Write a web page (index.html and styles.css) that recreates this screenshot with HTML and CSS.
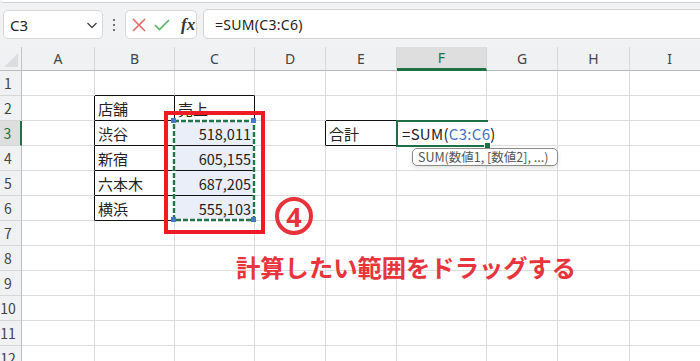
FILE: index.html
```html
<!DOCTYPE html>
<html lang="ja">
<head>
<meta charset="utf-8">
<title>Excel SUM</title>
<link rel="stylesheet" href="styles.css">
</head>
<body>
<div class="ribbon-edge"></div>
<div class="formula-bar">
  <div class="name-box">
    <span class="name-text">C3</span>
    <svg class="chevron" width="12" height="8" viewBox="0 0 12 8"><path d="M1.5 2 L6 6.5 L10.5 2" fill="none" stroke="#444" stroke-width="1.3"/></svg>
  </div>
  <div class="more-dots"><i></i><i></i><i></i></div>
  <div class="fx-box">
    <svg width="14" height="14" viewBox="0 0 14 14"><path d="M1 1 L13 13 M13 1 L1 13" stroke="#e06767" stroke-width="1.6" fill="none"/></svg>
    <svg width="16" height="12" viewBox="0 0 16 12"><path d="M1 6 L5.5 10.5 L15 1" stroke="#5cb46a" stroke-width="1.7" fill="none"/></svg>
    <span class="fx">fx</span>
  </div>
  <div class="formula-input">=SUM(C3:C6)</div>
</div>

<div class="sheet">
  <div class="c corner"><span class="tri"></span></div>
  <div class="c ch">A</div><div class="c ch">B</div><div class="c ch">C</div><div class="c ch">D</div><div class="c ch">E</div><div class="c ch ch-active">F</div><div class="c ch">G</div><div class="c ch">H</div><div class="c ch">I</div>

  <div class="c rh">1</div>
  <div class="c"></div><div class="c bk-b"></div><div class="c bk-b"></div><div class="c"></div><div class="c"></div><div class="c"></div><div class="c"></div><div class="c"></div><div class="c"></div>

  <div class="c rh">2</div>
  <div class="c bk-r"></div><div class="c bk-r bk-b">店舗</div><div class="c bk-r bk-b">売上</div><div class="c"></div><div class="c bk-b"></div><div class="c"></div><div class="c"></div><div class="c"></div><div class="c"></div>

  <div class="c rh rh-active">3</div>
  <div class="c bk-r"></div><div class="c bk-r bk-b">渋谷</div><div class="c bk-r bk-b sel num">518,011</div><div class="c bk-r"></div><div class="c bk-r bk-b">合計</div><div class="c editing">=SUM(<span class="ref">C3:C6</span>)</div><div class="c"></div><div class="c"></div><div class="c"></div>

  <div class="c rh">4</div>
  <div class="c bk-r"></div><div class="c bk-r bk-b">新宿</div><div class="c bk-r bk-b sel num">605,155</div><div class="c"></div><div class="c"></div><div class="c"></div><div class="c"></div><div class="c"></div><div class="c"></div>

  <div class="c rh">5</div>
  <div class="c bk-r"></div><div class="c bk-r bk-b">六本木</div><div class="c bk-r bk-b sel num">687,205</div><div class="c"></div><div class="c"></div><div class="c"></div><div class="c"></div><div class="c"></div><div class="c"></div>

  <div class="c rh">6</div>
  <div class="c bk-r"></div><div class="c bk-r bk-b">横浜</div><div class="c bk-r bk-b sel num">555,103</div><div class="c"></div><div class="c"></div><div class="c"></div><div class="c"></div><div class="c"></div><div class="c"></div>

  <div class="c rh">7</div>
  <div class="c"></div><div class="c"></div><div class="c"></div><div class="c"></div><div class="c"></div><div class="c"></div><div class="c"></div><div class="c"></div><div class="c"></div>
  <div class="c rh">8</div>
  <div class="c"></div><div class="c"></div><div class="c"></div><div class="c"></div><div class="c"></div><div class="c"></div><div class="c"></div><div class="c"></div><div class="c"></div>
  <div class="c rh">9</div>
  <div class="c"></div><div class="c"></div><div class="c"></div><div class="c"></div><div class="c"></div><div class="c"></div><div class="c"></div><div class="c"></div><div class="c"></div>
  <div class="c rh">10</div>
  <div class="c"></div><div class="c"></div><div class="c"></div><div class="c"></div><div class="c"></div><div class="c"></div><div class="c"></div><div class="c"></div><div class="c"></div>
  <div class="c rh">11</div>
  <div class="c"></div><div class="c"></div><div class="c"></div><div class="c"></div><div class="c"></div><div class="c"></div><div class="c"></div><div class="c"></div><div class="c"></div>
  <div class="c rh">12</div>
  <div class="c"></div><div class="c"></div><div class="c"></div><div class="c"></div><div class="c"></div><div class="c"></div><div class="c"></div><div class="c"></div><div class="c"></div>
</div>

<!-- overlays -->
<svg class="ants" width="90" height="110" viewBox="0 0 90 110">
  <rect x="3" y="3" width="80" height="99" fill="none" stroke="#ffffff" stroke-width="2.4"/>
  <rect x="3" y="3" width="80" height="99" fill="none" stroke="#21734a" stroke-width="2.4" stroke-dasharray="5 2"/>
  <rect x="0" y="0" width="5" height="5" fill="#4a78c9"/>
  <rect x="80" y="0" width="5" height="5" fill="#4a78c9"/>
  <rect x="0" y="99" width="5" height="5" fill="#4a78c9"/>
  <rect x="80" y="99" width="5" height="5" fill="#4a78c9"/>
</svg>
<div class="active-cell"><span class="handle"></span></div>
<div class="tooltip">SUM(数値1, [数値2], ...)</div>
<div class="red-box"></div>
<div class="step"><span>4</span></div>
<div class="note">計算したい範囲をドラッグする</div>
</body>
</html>
```
FILE: styles.css
```css
body {
  margin: 0;
  width: 700px;
  height: 361px;
  overflow: hidden;
  position: relative;
  background: #f1f2f4;
  font-family: "Noto Sans CJK JP", "Noto Sans", sans-serif;
}

.ribbon-edge {
  height: 2px;
  margin-left: 1px;
  background: #ffffff;
  border-bottom: 1px solid #cfd2d6;
  border-bottom-left-radius: 4px;
}

.formula-bar {
  height: 44px;
  box-sizing: border-box;
  padding-top: 7px;
  display: flex;
  align-items: flex-start;
}

.name-box {
  margin-left: 3px;
  width: 100px;
  height: 29px;
  box-sizing: border-box;
  background: #fff;
  border: 1px solid #d7d7d7;
  border-radius: 5px;
  display: flex;
  align-items: center;
  justify-content: space-between;
  padding: 0 4px 0 6px;
}

.name-text {
  font-family: "Noto Sans", sans-serif;
  font-size: 15px;
  color: #222;
}

.more-dots {
  width: 22px;
  height: 29px;
  display: flex;
  flex-direction: column;
  align-items: center;
  justify-content: center;
  gap: 3px;
}

.more-dots i {
  width: 2px;
  height: 2px;
  background: #444;
  border-radius: 1px;
}

.fx-box {
  width: 72px;
  height: 29px;
  box-sizing: border-box;
  background: #fff;
  border: 1px solid #d7d7d7;
  border-radius: 5px;
  display: flex;
  align-items: center;
  padding-left: 6px;
  gap: 8px;
}

.fx {
  font-family: "Liberation Serif", serif;
  font-style: italic;
  font-weight: 700;
  font-size: 17px;
  color: #333;
  margin-left: 3px;
}

.formula-input {
  margin-left: 6px;
  flex: 1;
  margin-right: -4px;
  height: 30px;
  margin-top: -1px;
  box-sizing: border-box;
  background: #fff;
  border: 1px solid #d2d2d2;
  border-radius: 5px 0 0 5px;
  padding-left: 11px;
  display: flex;
  align-items: center;
  font-family: "Noto Sans", sans-serif;
  font-size: 14px;
  letter-spacing: 0.3px;
  color: #222;
}

.sheet {
  display: grid;
  grid-template-columns: 22px 73px 80px 80px 71px 71px 90px 71px 72px 80px;
  grid-template-rows: 24px;
  grid-auto-rows: 25px;
  width: 710px;
  background: #fff;
}

.c {
  box-sizing: border-box;
  border-right: 1px solid #dcdcdc;
  border-bottom: 1px solid #dcdcdc;
  font-size: 15px;
  color: #222;
  padding-left: 3px;
  display: flex;
  align-items: center;
  white-space: nowrap;
  overflow: hidden;
}

.corner {
  background: #f0f1f3;
  border-right-color: #c4c4c4;
  border-bottom-color: #bdbdbd;
  position: relative;
}

.tri {
  position: absolute;
  right: 3px;
  bottom: 3px;
  width: 0;
  height: 0;
  border-left: 14px solid transparent;
  border-bottom: 14px solid #dcdde0;
}

.ch {
  background: #f0f1f3;
  justify-content: center;
  padding-left: 0;
  font-family: "Noto Sans", sans-serif;
  font-size: 14px;
  color: #444;
  border-right-color: #d6d6d6;
  border-bottom-color: #b8b8b8;
}

.ch-active {
  background: #dedede;
  color: #1e7145;
  border-bottom: 3px solid #1e7145;
}

.rh {
  background: #f0f1f3;
  justify-content: center;
  padding: 0 5px 0 0;
  font-size: 14px;
  color: #444;
  border-right-color: #bcbcbc;
  border-bottom-color: #d6d6d6;
}

.rh-active {
  background: #dedede;
  color: #1e7145;
  border-right: 2px solid #1e7145;
}

.bk-r { border-right-color: #111; }
.bk-b { border-bottom-color: #111; }

.sel { background: #e9eef8; }

.num {
  justify-content: flex-end;
  padding: 0 3px 0 0;
  font-size: 14.5px;
}

.editing {
  overflow: visible;
  border-right-color: transparent;
  position: relative;
  z-index: 2;
  padding-left: 5px;
  font-size: 15px;
  letter-spacing: 0.3px;
}

.ref { color: #4472c4; }

.ants {
  position: absolute;
  left: 171px;
  top: 118px;
}

.active-cell {
  position: absolute;
  left: 396px;
  top: 120px;
  width: 92px;
  height: 27px;
  box-sizing: border-box;
  border: 2px solid #1e7145;
  border-right: none;
  z-index: 3;
}

.handle {
  position: absolute;
  right: -3px;
  bottom: -4px;
  width: 5px;
  height: 5px;
  background: #1e7145;
  border: 1px solid #fff;
}

.tooltip {
  position: absolute;
  left: 412px;
  top: 148px;
  width: 146px;
  height: 18px;
  box-sizing: border-box;
  padding: 0 5px;
  background: #fff;
  border: 1px solid #8a8a8a;
  border-radius: 5px;
  box-shadow: 0 2px 4px rgba(0, 0, 0, 0.12);
  font-size: 12.5px;
  line-height: 16px;
  color: #555;
  white-space: nowrap;
  z-index: 4;
}

.red-box {
  position: absolute;
  left: 164px;
  top: 111px;
  width: 101px;
  height: 123px;
  box-sizing: border-box;
  border: 4px solid #ed1c24;
  z-index: 5;
}

.step {
  position: absolute;
  left: 275px;
  top: 197px;
  width: 38px;
  height: 38px;
  box-sizing: border-box;
  border: 4px solid #e8323a;
  border-radius: 50%;
  display: flex;
  align-items: center;
  justify-content: center;
  z-index: 5;
}

.step span {
  font-family: "Noto Sans", sans-serif;
  font-weight: 700;
  font-size: 27px;
  line-height: 1;
  color: #e8323a;
}

.note {
  position: absolute;
  left: 236px;
  top: 250px;
  font-weight: 700;
  font-size: 24.3px;
  line-height: 34px;
  color: #e8343c;
  white-space: nowrap;
  z-index: 5;
}
```
